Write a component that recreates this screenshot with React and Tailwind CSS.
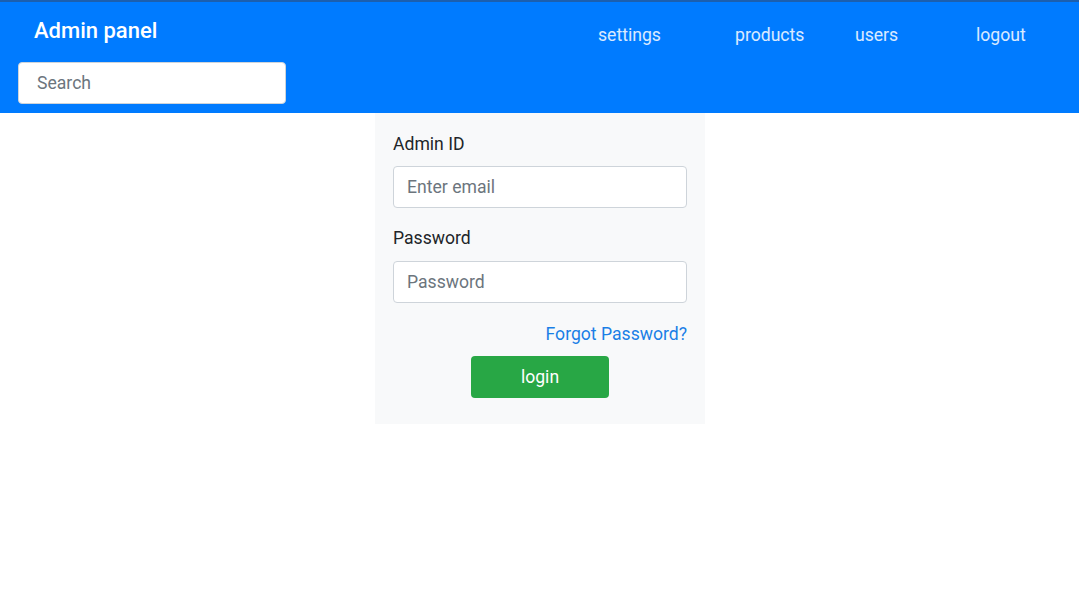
import React from "react";

export default function App() {
  return (
    <div className="min-h-[607px] w-[1079px] bg-white font-['Roboto',sans-serif]">
      <header className="h-[113px] bg-[#007bff] border-t-2 border-[#1c5fae] relative">
        <div className="flex items-start">
          <div className="pl-[34px] pt-[16px] w-[598px]">
            <div className="text-white text-[22px] font-medium leading-[26px]">Admin panel</div>
          </div>
          <nav className="flex pt-[21px] text-[17.6px] leading-[24px] text-white/85">
            <a className="w-[137px]">settings</a>
            <a className="w-[120px]">products</a>
            <a className="w-[121px]">users</a>
            <a>logout</a>
          </nav>
        </div>
        <div className="pl-[18px] pt-[15px]">
          <input
            placeholder="Search"
            className="w-[268px] h-[42px] rounded-[4px] bg-white px-[18px] text-[17.6px] text-gray-700 placeholder:text-[#6c757d] border border-[#ced4da] outline-none"
          />
        </div>
      </header>
      <main className="flex justify-center">
        <div className="ml-[1px] w-[330px] h-[311px] bg-[#f8f9fa] px-[18px] pt-[20px]">
          <label className="block text-[17.6px] leading-[22px] text-[#212529]">Admin ID</label>
          <input
            placeholder="Enter email"
            className="mt-[11px] w-full h-[42px] rounded-[4px] bg-white px-[13px] text-[17.6px] placeholder:text-[#6c757d] border border-[#ced4da] outline-none"
          />
          <label className="block mt-[19px] text-[17.6px] leading-[22px] text-[#212529]">Password</label>
          <input
            placeholder="Password"
            className="mt-[12px] w-full h-[42px] rounded-[4px] bg-white px-[13px] text-[17.6px] placeholder:text-[#6c757d] border border-[#ced4da] outline-none"
          />
          <div className="mt-[20px] text-right text-[17.6px] leading-[22px] text-[#1a7fe6]">Forgot Password?</div>
          <div className="flex justify-center mt-[11px]">
            <button className="w-[138px] h-[42px] rounded-[4px] bg-[#28a745] text-white text-[17.6px]">login</button>
          </div>
        </div>
      </main>
    </div>
  );
}
